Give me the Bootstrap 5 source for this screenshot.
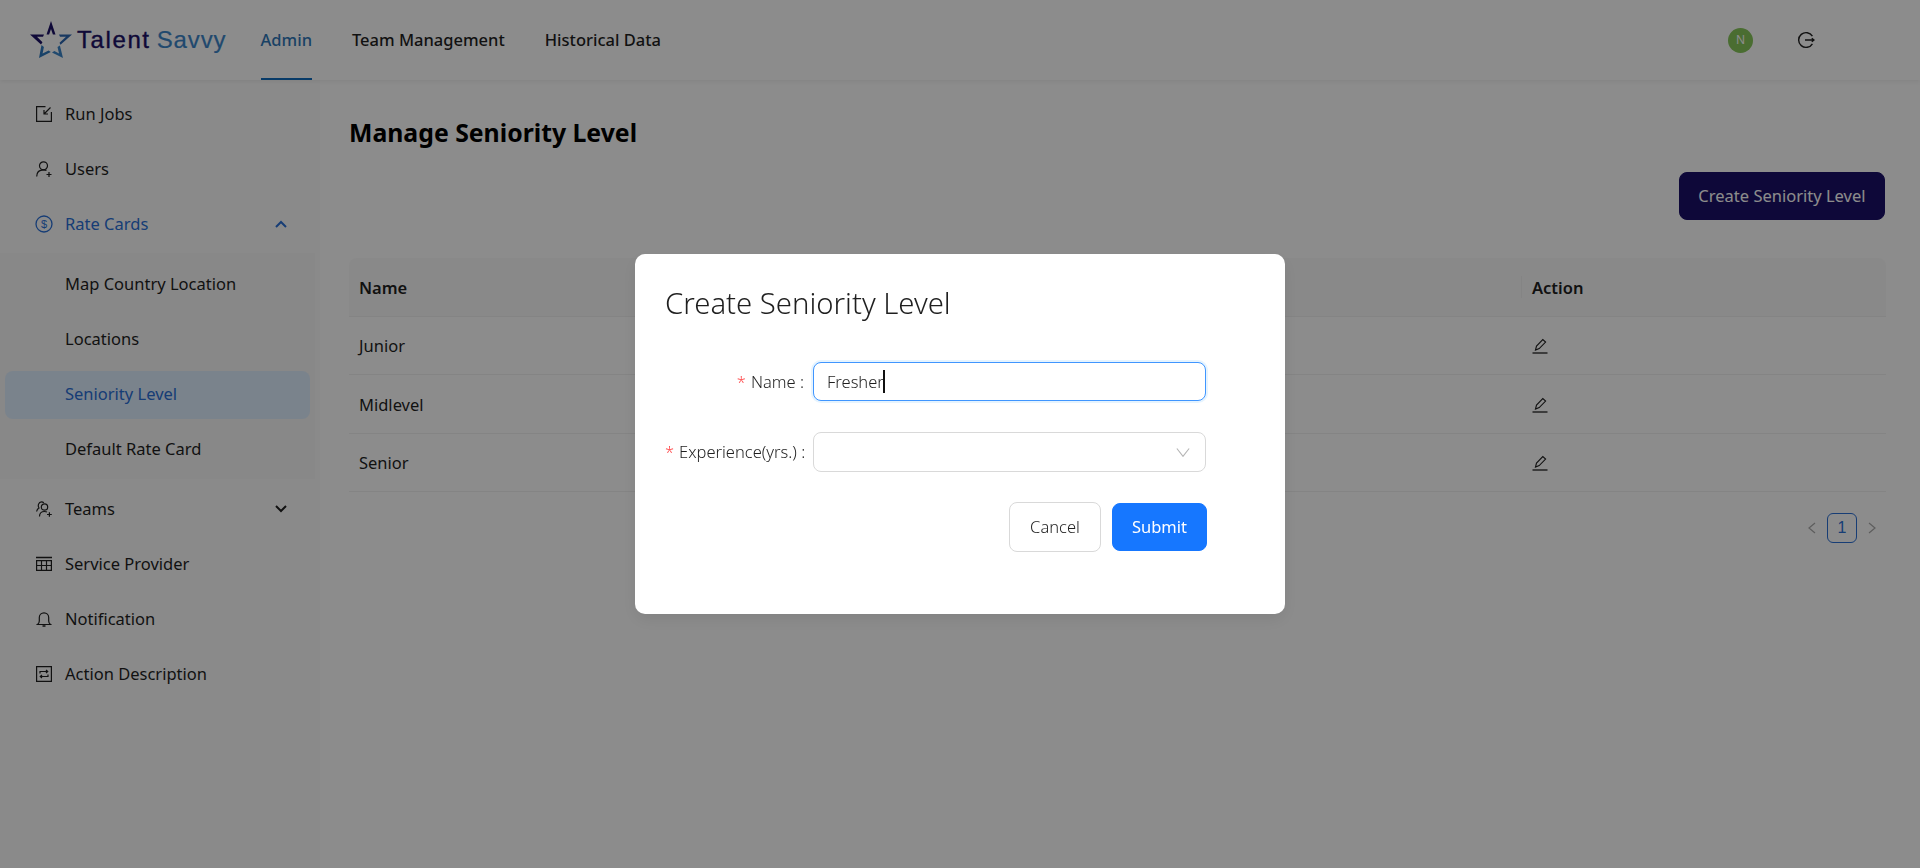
<!DOCTYPE html>
<html lang="en">
<head>
  <meta charset="UTF-8">
  <title>Manage Seniority Level</title>
  <meta name="viewport" content="width=device-width, initial-scale=1">
  <link href="https://cdn.jsdelivr.net/npm/bootstrap@5.3.0/dist/css/bootstrap.min.css" rel="stylesheet">
  <style>
    body {
      font-family: "Noto Sans", "Open Sans", sans-serif;
      font-size: 16.5px;
      color: #1f1f1f;
      background: #fff;
      height: 868px;
      overflow: hidden;
    }
    .top-bar {
      height: 80px;
      padding: 0 0 0 30px;
      background: #fff;
      box-shadow: 0 2px 4px rgba(0, 0, 0, .06);
      position: relative;
    }
    .logo-text {
      font-family: "Liberation Sans", Arial, sans-serif;
      font-size: 24px;
      letter-spacing: 1.6px;
      color: #1c1166;
      margin-left: 5px;
      -webkit-text-stroke: .4px #1c1166;
    }
    .logo-text span { color: #3b85c9; margin-left: 6px; letter-spacing: .9px; -webkit-text-stroke: .2px #3b85c9; }
    .top-links { margin-left: 34px; gap: 40px; height: 80px; }
    .top-links .nav-link {
      height: 80px;
      padding: 3px 0 0;
      display: flex;
      align-items: center;
      color: #1f1f1f;
      font-weight: 500;
      font-size: 16.5px;
      border-bottom: 2px solid transparent;
    }
    .top-links .nav-link.active { color: #2f77b8; border-bottom-color: #0f6cbd; }
    .user-dot {
      width: 25px;
      height: 25px;
      border-radius: 50%;
      background: #87c65a;
      color: #fff;
      font-size: 12px;
      margin-right: 44px;
    }
    .logout-ico { margin-right: 105px; }

    .side-menu { width: 320px; padding-top: 11px; flex: none; background: #fcfcfc; min-height: 788px; }
    .side-item {
      height: 48px;
      margin-bottom: 7px;
      padding: 0 33px 2px 36px;
      color: #1f1f1f;
      gap: 13px;
      text-decoration: none;
    }
    .side-item.is-open { color: #2a6fd6; margin-bottom: 4px; }
    .side-sub { width: 315px; background: #f7f7f7; padding: 8px 0 5px; margin-bottom: 7px; }
    .side-sub .side-item { width: 305px; margin-left: 5px; padding-left: 60px; border-radius: 8px; }
    .side-sub .side-item:last-child { margin-bottom: 0; }
    .side-sub .side-item.is-current { background: #dfeeff; color: #2a6fd6; }
    .chev { margin-left: auto; }

    .main-area { flex: 1; padding: 32px 34px 0 29px; }
    .page-title { font-size: 24.8px; font-weight: 700; line-height: 40px; color: #000; margin: 0 0 20px; }
    .btn-create {
      --bs-btn-bg: #1a0f68;
      --bs-btn-border-color: #1a0f68;
      --bs-btn-color: #fff;
      height: 48px;
      margin-right: 1px;
      padding: 0 18.5px;
      font-size: 16.5px;
      border-radius: 8px;
    }
    .level-table { margin: 38px 0 21px; --bs-table-border-color: #f0f0f0; }
    .level-table th, .level-table td { height: 58.4px; padding: 2px 10px 0; vertical-align: middle; font-size: 16.5px; color: #1f1f1f; }
    .level-table th { background: #fafafa; font-weight: 600; }
    .level-table th:first-child { border-top-left-radius: 8px; }
    .level-table th:last-child { border-top-right-radius: 8px; position: relative; }
    .level-table th:last-child::before {
      content: "";
      position: absolute;
      left: 0;
      top: 18px;
      height: 22px;
      width: 1px;
      background: #f0f0f0;
    }
    .col-action { width: 365px; padding-left: 11px !important; }
    .level-table td.col-action { padding-top: 0; padding-bottom: 1px; }
    .pager { gap: 10px; color: #aaa; padding-right: 9px; }
    .pager-num {
      width: 30px;
      height: 30px;
      border: 1px solid #2a6fd6;
      border-radius: 6px;
      color: #2a6fd6;
      font-family: "Liberation Sans", Arial, sans-serif;
      font-size: 16px;
    }

    .modal-backdrop { --bs-backdrop-opacity: .45; }
    .modal-dialog { --bs-modal-width: 650px; margin-top: 254px; }
    .modal-content { height: 360px; padding: 28px 30px; border: 0; border-radius: 10px; box-shadow: 0 6px 16px rgba(0, 0, 0, .08); }
    .dlg-title { font-size: 29.3px; font-weight: 300; line-height: 42px; color: #1f1f1f; margin: 0 0 38px; }
    .dlg-row { width: 541px; margin-bottom: 31px; }
    .dlg-label { width: 148px; flex: none; padding: 1px 9px 0 0; white-space: nowrap; font-size: 16.5px; font-weight: 300; }
    .dlg-label i { color: #ff4d4f; font-style: normal; margin-right: 5px; }
    .dlg-field { position: relative; flex: 1; }
    .dlg-field .form-control, .dlg-field .form-select { height: 39px; border-radius: 8px; font-size: 16.5px; font-weight: 300; color: #1f1f1f; padding-left: 13px; box-shadow: none; }
    .dlg-field .form-control { border-color: #4096ff; box-shadow: 0 0 0 2px rgba(5, 145, 255, .1); }
    .dlg-field .form-select {
      height: 40px;
      border-color: #d9d9d9;
      background-image: url("data:image/svg+xml,%3Csvg xmlns='http://www.w3.org/2000/svg' viewBox='0 0 16 16'%3E%3Cpath fill='none' stroke='%23b5b5b5' stroke-width='1.3' d='M1 4l7 9 7-9'/%3E%3C/svg%3E");
      background-size: 14px 14px;
      background-position: right 15px center;
    }
    .text-caret { position: absolute; left: 70px; top: 8px; width: 2px; height: 23px; background: #111; }
    .dlg-actions { width: 542px; gap: 11px; margin-top: -1px; }
    .dlg-actions .btn { border-radius: 8px; font-size: 16.5px; font-weight: 300; }
    .btn-cancel { width: 92px; height: 50px; border: 1px solid #d9d9d9; color: #1f1f1f; background: #fff; }
    .btn-submit { --bs-btn-bg: #1677ff; --bs-btn-border-color: #1677ff; --bs-btn-color: #fff; width: 95px; height: 48px; font-weight: 400 !important; }
  </style>
</head>
<body>

  <!-- Top bar -->
  <nav class="navbar top-bar d-flex align-items-center flex-nowrap justify-content-start">
    <svg width="42" height="38" viewBox="0 0 42 38">
      <path fill="#1c1166" d="M21 0l4.500 13.500h-2.600L21 8l-1.900 5.500h-2.600z"/>
      <path fill="#1c1166" d="M0 13.500h14l-1 2.200H7l5.500 5.500-1.500 2.200z"/>
      <path fill="#2c66b0" d="M42 13.500H29l1 2.200h6l-6.500 6 1 2z"/>
      <path fill="#2f79bd" d="M9 37l2.500-13 2.400 2-1.300 6.500 6-3 2.200 1.600z"/>
      <path fill="#3b85c9" d="M33 37l-11-5.500 2.400-1.600 4.600 2.600-1.500-6.500 2.400-1.600z"/>
    </svg>
    <span class="logo-text">Talent<span>Savvy</span></span>
    <div class="nav top-links flex-nowrap">
      <a class="nav-link active" href="#">Admin</a>
      <a class="nav-link" href="#">Team Management</a>
      <a class="nav-link" href="#">Historical Data</a>
    </div>
    <div class="d-flex align-items-center ms-auto">
      <div class="user-dot d-flex align-items-center justify-content-center">N</div>
      <svg class="logout-ico" width="18" height="18" viewBox="0 0 18 18" fill="none" stroke="#1f1f1f" stroke-width="1.4">
        <path d="M15.400 5.200A7.400 7.400 0 1 0 15.400 12.800"/><path d="M8 9h9M14.800 7.200L17 9l-2.200 1.800"/>
      </svg>
    </div>
  </nav>

  <div class="d-flex">
    <!-- Side menu -->
    <aside class="side-menu">
      <a href="#" class="side-item d-flex align-items-center">
        <svg width="16" height="16" viewBox="0 0 16 16" fill="none" stroke="currentColor" stroke-width="1.2"><path d="M9.500.6H.6v14.800h14.800V6"/><path d="M14.500 1.500L8 8M8 4v4h4"/></svg>
        Run Jobs
      </a>
      <a href="#" class="side-item d-flex align-items-center">
        <svg width="16" height="16" viewBox="0 0 16 16" fill="none" stroke="currentColor" stroke-width="1.2"><circle cx="7.500" cy="4.800" r="4"/><path d="M.7 15.500c0-4 2.500-6.700 6.800-6.700 1.200 0 2.200.2 3 .6"/><path d="M10.500 13.500h5M13 11v5"/></svg>
        Users
      </a>
      <a href="#" class="side-item is-open d-flex align-items-center">
        <svg width="18" height="18" viewBox="0 0 18 18" style="margin:0 -1px" fill="none" stroke="currentColor" stroke-width="1.3"><circle cx="9" cy="9" r="8"/><text x="9" y="13" text-anchor="middle" font-size="11" font-family="Liberation Sans" stroke="none" fill="currentColor">$</text></svg>
        Rate Cards
        <svg class="chev" width="12" height="8" viewBox="0 0 12 8" fill="none" stroke="currentColor" stroke-width="2"><path d="M1 7l5-5 5 5"/></svg>
      </a>
      <div class="side-sub">
        <a href="#" class="side-item d-flex align-items-center">Map Country Location</a>
        <a href="#" class="side-item d-flex align-items-center">Locations</a>
        <a href="#" class="side-item is-current d-flex align-items-center">Seniority Level</a>
        <a href="#" class="side-item d-flex align-items-center">Default Rate Card</a>
      </div>
      <a href="#" class="side-item d-flex align-items-center">
        <svg width="16" height="16" viewBox="0 0 16 16" fill="none" stroke="currentColor" stroke-width="1.2"><path d="M.6 10.500C1 8.500 2 7.500 3 7 1.500 5 2.500.8 5.500.8c1 0 1.800.4 2.300 1"/><circle cx="8.500" cy="6" r="3.200"/><path d="M3.500 15.500c0-3 2-5 5-5 1 0 1.800.2 2.500.6"/><path d="M11 13.500h4.800M13.400 11.200v4.600"/></svg>
        Teams
        <svg class="chev" width="12" height="8" viewBox="0 0 12 8" fill="none" stroke="currentColor" stroke-width="2"><path d="M1 1l5 5 5-5"/></svg>
      </a>
      <a href="#" class="side-item d-flex align-items-center">
        <svg width="16" height="16" viewBox="0 0 16 16" fill="none" stroke="currentColor" stroke-width="1.2"><path d="M0 1.500h16" stroke-width="1.500"/><path d="M.6 4.600h14.800v9.800H.6zM.6 9.500h14.800M5.500 4.600v9.800M10.500 4.600v9.800"/></svg>
        Service Provider
      </a>
      <a href="#" class="side-item d-flex align-items-center">
        <svg width="16" height="16" viewBox="0 0 16 16" fill="none" stroke="currentColor" stroke-width="1.2"><path d="M1.500 13.500h13c-1.500-1-1.800-2-1.800-3.500V6.500a4.700 4.700 0 0 0-9.400 0V10c0 1.500-.3 2.500-1.800 3.500z"/><path d="M6.500 15h3" stroke-width="1.500"/></svg>
        Notification
      </a>
      <a href="#" class="side-item d-flex align-items-center">
        <svg width="16" height="16" viewBox="0 0 16 16" fill="none" stroke="currentColor" stroke-width="1.2"><path d="M.6.6h14.800v14.800H.6z"/><path d="M4 7.500V5.500h7.500M10 4l1.700 1.500L10 7M12 8.500v2H4.500M6 12l-1.700-1.500L6 9"/></svg>
        Action Description
      </a>
    </aside>

    <!-- Page content -->
    <main class="main-area">
      <h1 class="page-title">Manage Seniority Level</h1>
      <div class="d-flex justify-content-end">
        <button class="btn btn-create" type="button">Create Seniority Level</button>
      </div>
      <table class="table level-table">
        <thead>
          <tr><th>Name</th><th class="col-action">Action</th></tr>
        </thead>
        <tbody>
          <tr><td>Junior</td><td class="col-action"><svg width="16" height="16" viewBox="0 0 16 16" fill="none" stroke="#1f1f1f" stroke-width="1.1"><path d="M3.500 12L4.500 8 10.800 1.500l2.800 2.600-6.400 6.500z"/><path d="M.5 15h15" stroke-width="1.3"/></svg></td></tr>
          <tr><td>Midlevel</td><td class="col-action"><svg width="16" height="16" viewBox="0 0 16 16" fill="none" stroke="#1f1f1f" stroke-width="1.1"><path d="M3.500 12L4.500 8 10.800 1.500l2.800 2.600-6.400 6.500z"/><path d="M.5 15h15" stroke-width="1.3"/></svg></td></tr>
          <tr><td>Senior</td><td class="col-action"><svg width="16" height="16" viewBox="0 0 16 16" fill="none" stroke="#1f1f1f" stroke-width="1.1"><path d="M3.500 12L4.500 8 10.800 1.500l2.800 2.600-6.400 6.500z"/><path d="M.5 15h15" stroke-width="1.3"/></svg></td></tr>
        </tbody>
      </table>
      <div class="pager d-flex align-items-center justify-content-end">
        <svg width="10" height="12" viewBox="0 0 10 12" fill="none" stroke="currentColor" stroke-width="1.2"><path d="M8 1L2 6l6 5"/></svg>
        <div class="pager-num d-flex align-items-center justify-content-center">1</div>
        <svg width="10" height="12" viewBox="0 0 10 12" fill="none" stroke="currentColor" stroke-width="1.2"><path d="M2 1l6 5-6 5"/></svg>
      </div>
    </main>
  </div>

  <!-- Create dialog -->
  <div class="modal-backdrop show"></div>
  <div class="modal d-block" tabindex="-1">
    <div class="modal-dialog">
      <div class="modal-content">
        <h2 class="dlg-title">Create Seniority Level</h2>
        <form>
          <div class="dlg-row d-flex align-items-center">
            <label class="dlg-label text-end" for="levelName"><i>*</i>Name :</label>
            <div class="dlg-field">
              <input id="levelName" class="form-control" type="text" value="Fresher">
              <span class="text-caret"></span>
            </div>
          </div>
          <div class="dlg-row d-flex align-items-center">
            <label class="dlg-label text-end" for="levelExp"><i>*</i>Experience(yrs.) :</label>
            <div class="dlg-field">
              <select id="levelExp" class="form-select"><option></option></select>
            </div>
          </div>
          <div class="dlg-actions d-flex justify-content-end align-items-center">
            <button class="btn btn-cancel" type="button">Cancel</button>
            <button class="btn btn-submit" type="button">Submit</button>
          </div>
        </form>
      </div>
    </div>
  </div>

  <script src="https://cdn.jsdelivr.net/npm/bootstrap@5.3.0/dist/js/bootstrap.bundle.min.js"></script>
</body>
</html>
